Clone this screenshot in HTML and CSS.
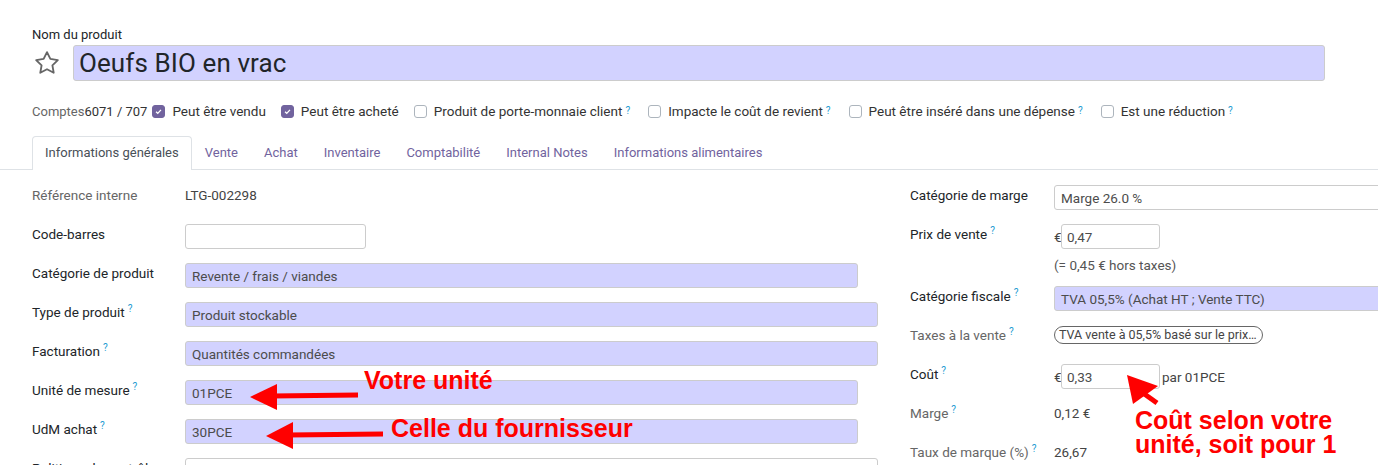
FILE: index.html
```html
<!DOCTYPE html>
<html lang="fr">
<head>
  <meta charset="UTF-8" />
  <title>Oeufs BIO en vrac</title>
  <link rel="stylesheet" href="styles.css">
</head>
<body>
  <div class="sheet">
    <!-- Product name -->
    <div class="title">
      <label class="name-label">Nom du produit</label>
      <div class="name-row">
        <svg class="star" viewBox="0 0 24 24"><polygon points="12,2 15.09,8.26 22,9.27 17,14.14 18.18,21.02 12,17.77 5.82,21.02 7,14.14 2,9.27 8.91,8.26" /></svg>
        <div class="name-field">Oeufs BIO en vrac</div>
      </div>
    </div>

    <!-- Options -->
    <div class="options">
      <span class="muted">Comptes</span><span class="accounts">6071 / 707</span>
      <label class="check"><span class="box checked"><svg viewBox="0 0 13 13"><path d="M3.6 6.8 L5.6 8.7 L9.4 4.6" /></svg></span>Peut être vendu</label>
      <label class="check"><span class="box checked"><svg viewBox="0 0 13 13"><path d="M3.6 6.8 L5.6 8.7 L9.4 4.6" /></svg></span>Peut être acheté</label>
      <label class="check"><span class="box"></span>Produit de porte-monnaie client<sup class="help">?</sup></label>
      <label class="check"><span class="box"></span>Impacte le coût de revient<sup class="help">?</sup></label>
      <label class="check"><span class="box"></span>Peut être inséré dans une dépense<sup class="help">?</sup></label>
      <label class="check"><span class="box"></span>Est une réduction<sup class="help">?</sup></label>
    </div>

    <!-- Tabs -->
    <ul class="tabs">
      <li class="active">Informations générales</li>
      <li>Vente</li>
      <li>Achat</li>
      <li>Inventaire</li>
      <li>Comptabilité</li>
      <li>Internal Notes</li>
      <li>Informations alimentaires</li>
    </ul>

    <div class="tab-pane">
      <div class="group left">
        <div class="row"><div class="lbl muted">Référence interne</div><div class="val">LTG-002298</div></div>
        <div class="row"><div class="lbl">Code-barres</div><div><div class="input short"></div></div></div>
        <div class="row"><div class="lbl">Catégorie de produit</div><div><div class="input required m2o">Revente / frais / viandes</div></div></div>
        <div class="row"><div class="lbl">Type de produit<sup class="help">?</sup></div><div><div class="input required">Produit stockable</div></div></div>
        <div class="row"><div class="lbl">Facturation<sup class="help">?</sup></div><div><div class="input required">Quantités commandées</div></div></div>
        <div class="row"><div class="lbl">Unité de mesure<sup class="help">?</sup></div><div><div class="input required m2o">01PCE</div></div></div>
        <div class="row"><div class="lbl">UdM achat<sup class="help">?</sup></div><div><div class="input required m2o">30PCE</div></div></div>
        <div class="row"><div class="lbl">Politique de contrôle</div><div><div class="input"></div></div></div>
      </div>

      <div class="group right">
        <div class="row"><div class="lbl">Catégorie de marge</div><div><div class="input">Marge 26.0 %</div></div></div>
        <div class="row">
          <div class="lbl">Prix de vente<sup class="help">?</sup></div>
          <div>
            <div class="money"><span class="cur">€</span><div class="input price">0,47</div></div>
            <div class="hint">(= 0,45 € hors taxes)</div>
          </div>
        </div>
        <div class="row"><div class="lbl">Catégorie fiscale<sup class="help">?</sup></div><div><div class="input required">TVA 05,5% (Achat HT ; Vente TTC)</div></div></div>
        <div class="row"><div class="lbl muted">Taxes à la vente<sup class="help">?</sup></div><div><span class="tag">TVA vente à 05,5% basé sur le prix…</span></div></div>
        <div class="row">
          <div class="lbl">Coût<sup class="help">?</sup></div>
          <div class="money"><span class="cur">€</span><div class="input price">0,33</div><span class="per">par 01PCE</span></div>
        </div>
        <div class="row"><div class="lbl muted">Marge<sup class="help">?</sup></div><div class="val">0,12 €</div></div>
        <div class="row"><div class="lbl muted">Taux de marque (%)<sup class="help">?</sup></div><div class="val">26,67</div></div>
      </div>
    </div>

    <!-- Annotations drawn over the form -->
    <svg class="arrows" viewBox="0 0 1378 465">
      <line x1="272" y1="396" x2="358" y2="395" />
      <polygon points="250,397 277,384 277,410" />
      <line x1="288" y1="435" x2="383" y2="434" />
      <polygon points="266,436 293,422 293,449" />
      <line x1="1143" y1="393" x2="1157" y2="403" />
      <polygon points="1127,375 1133,404 1158,386" />
    </svg>
    <div class="callout unit">Votre unité</div>
    <div class="callout supplier">Celle du fournisseur</div>
    <div class="callout cost">Coût selon votre<br>unité, soit pour 1</div>
  </div>
</body>
</html>
```

FILE: styles.css
```css
body {
  margin: 0;
  background-color: #fff;
  font-family: Roboto, "Liberation Sans", sans-serif;
  font-size: 13.5px;
  color: #212529;
  overflow: hidden;
}

.sheet {
  position: relative;
  width: 1378px;
  height: 465px;
  overflow: hidden;
}

.muted {
  color: #666;
}

.help {
  color: #1d9bd1;
  font-size: 10px;
  line-height: 0;
  margin-left: 3px;
}

/* Title */
.title {
  padding: 26px 0 0 32px;
}

.name-label {
  display: block;
  font-size: 13px;
  line-height: 18px;
  margin-bottom: 1px;
}

.name-row {
  display: flex;
  align-items: center;
  gap: 13px;
}

.star {
  width: 26px;
  height: 26px;
  margin-left: 2px;
  fill: none;
  stroke: #666;
  stroke-width: 1.7;
  stroke-linejoin: round;
}

.name-field {
  width: 1252px;
  height: 36px;
  box-sizing: border-box;
  background-color: #d2d2ff;
  border: 1px solid #ccc;
  border-radius: 3px;
  padding-left: 5px;
  font-size: 26px;
  letter-spacing: 0.1px;
  line-height: 35px;
  color: #212529;
}

/* Options */
.options {
  display: flex;
  align-items: center;
  height: 20px;
  margin-top: 20px;
  padding-left: 32px;
  color: #333;
}

.options .muted,
.accounts {
  font-size: 13px;
}

.accounts {
  color: #333;
  margin-right: 5px;
}

.check {
  display: flex;
  align-items: center;
  margin-right: 15px;
  color: #333;
}

.check .help {
  margin-right: 3px;
}

.box {
  width: 13px;
  height: 13px;
  box-sizing: border-box;
  border: 1px solid #adb5bd;
  border-radius: 3px;
  margin-right: 7px;
  background: #fff;
}

.box.checked {
  background-color: #71639e;
  border-color: #71639e;
}

.box svg {
  display: block;
  width: 11px;
  height: 11px;
  fill: none;
  stroke: #fff;
  stroke-width: 1.6;
}

/* Tabs */
.tabs {
  display: flex;
  list-style: none;
  margin: 15px 0 0;
  padding: 0 0 0 32px;
  border-bottom: 1px solid #dee2e6;
  height: 33px;
  font-size: 13px;
}

.tabs li {
  height: 34px;
  box-sizing: border-box;
  padding: 0 12px;
  border: 1px solid transparent;
  border-bottom: none;
  line-height: 31px;
  color: #71639e;
}

.tabs li.active {
  background-color: #fff;
  border-color: #dee2e6;
  border-radius: 4px 4px 0 0;
  color: #495057;
}

/* Form */
.tab-pane {
  display: grid;
  grid-template-columns: 846px 500px;
  column-gap: 32px;
  padding: 15px 0 0 32px;
}

.row {
  display: grid;
  grid-template-columns: 153px 1fr;
  min-height: 39px;
}

.right .row {
  grid-template-columns: 144px 1fr;
}

.lbl,
.val {
  line-height: 21px;
}

.val {
  color: #444;
}

.input {
  height: 25px;
  box-sizing: border-box;
  border: 1px solid #ccc;
  border-radius: 3px;
  padding: 0 6px;
  line-height: 24px;
  color: #4c4c4c;
  white-space: nowrap;
  overflow: hidden;
}

.input.required {
  background-color: #d2d2ff;
}

.input.short {
  width: 181px;
}

.input.m2o {
  width: 673px;
}

.money {
  display: flex;
  align-items: center;
  height: 25px;
  color: #444;
}

.cur {
  width: 7px;
}

.input.price {
  width: 99px;
  padding-left: 5px;
}

.per {
  margin-left: 2px;
}

.hint {
  margin-top: 6px;
  padding-bottom: 11px;
  line-height: 20px;
  color: #555;
}

.tag {
  display: inline-block;
  width: 209px;
  height: 18px;
  box-sizing: border-box;
  margin-top: 1px;
  border: 1px solid #666;
  border-radius: 9px;
  padding: 0 4px;
  font-size: 12.5px;
  line-height: 16px;
  color: #444;
  white-space: nowrap;
  overflow: hidden;
}

/* Annotations */
.arrows {
  position: absolute;
  top: 0;
  left: 0;
  width: 1378px;
  height: 465px;
  pointer-events: none;
}

.arrows line {
  stroke: #f00;
  stroke-width: 5;
}

.arrows polygon {
  fill: #f00;
}

.callout {
  position: absolute;
  color: #f00;
  font-family: "Liberation Sans", Arial, sans-serif;
  font-weight: bold;
  font-size: 25px;
  line-height: 25px;
  white-space: nowrap;
}

.callout.unit {
  left: 364px;
  top: 368px;
}

.callout.supplier {
  left: 391px;
  top: 416px;
}

.callout.cost {
  left: 1135px;
  top: 408px;
  line-height: 24px;
}
```
